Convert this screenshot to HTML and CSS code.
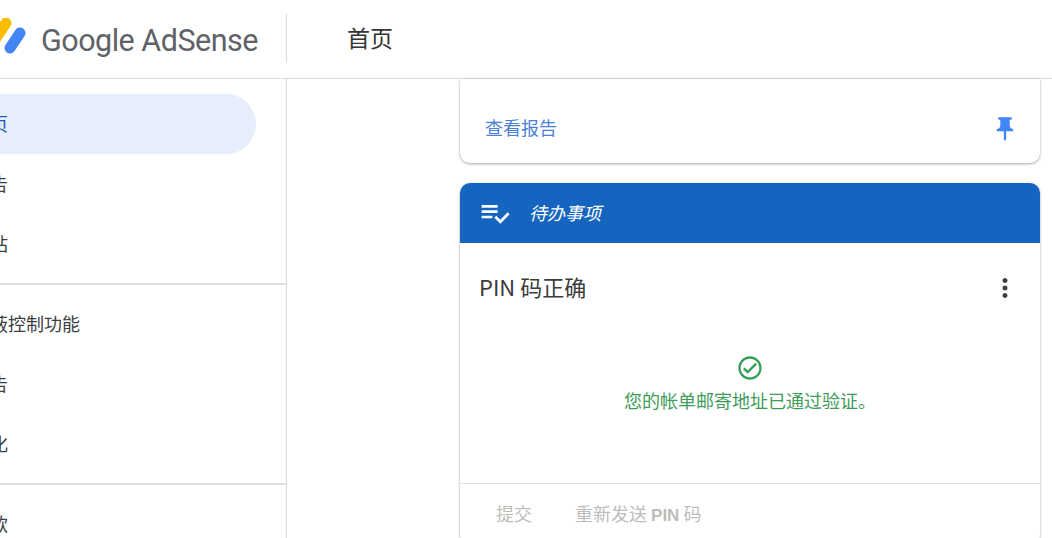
FILE: index.html
```html
<!DOCTYPE html>
<html lang="zh-CN">
<head>
    <meta charset="UTF-8">
    <title>Google AdSense</title>
    <link rel="stylesheet" href="styles.css">
</head>
<body>
    <div class="app">
        <header class="topbar">
            <div class="brand">
                <svg class="brand-mark" width="40" height="40" viewBox="0 0 40 40">
                    <line class="mark-yellow" x1="10" y1="20" x2="20" y2="5"/>
                    <line class="mark-blue" x1="24" y1="30" x2="34" y2="15"/>
                </svg>
                <span class="brand-name">Google AdSense</span>
            </div>
            <h1 class="page-title">首页</h1>
        </header>

        <div class="layout">
            <nav class="sidebar">
                <div class="nav-group">
                    <a class="nav-link active">首页</a>
                    <a class="nav-link">报告</a>
                    <a class="nav-link">网站</a>
                </div>
                <div class="nav-group">
                    <a class="nav-link">屏蔽控制功能</a>
                    <a class="nav-link">广告</a>
                    <a class="nav-link">优化</a>
                </div>
                <div class="nav-group">
                    <a class="nav-link">付款</a>
                </div>
            </nav>

            <main class="content">
                <section class="card report-card">
                    <a class="report-link">查看报告</a>
                    <svg class="pin-icon" width="28" height="28" viewBox="0 0 24 24"><path d="M16 9V4l1 0c.55 0 1-.45 1-1s-.45-1-1-1H7c-.55 0-1 .45-1 1s.45 1 1 1l1 0v5c0 1.66-1.34 3-3 3v2h5.97v7l1 1 1-1v-7H19v-2c-1.66 0-3-1.34-3-3z"/></svg>
                </section>

                <section class="card todo-card">
                    <div class="todo-head">
                        <svg class="todo-icon" width="32" height="32" viewBox="0 0 24 24"><path d="M14 10H2v2h12v-2zm0-4H2v2h12V6zM2 16h8v-2H2v2zm19.5-4.5L23 13l-6.99 7-4.51-4.5L13 14l3.01 3 5.49-5.5z"/></svg>
                        <span class="todo-label">待办事项</span>
                    </div>
                    <div class="todo-title">
                        <h2>PIN 码正确</h2>
                        <svg class="more-icon" width="30" height="30" viewBox="0 0 24 24"><path d="M12 8c1.1 0 2-.9 2-2s-.9-2-2-2-2 .9-2 2 .9 2 2 2zm0 2c-1.1 0-2 .9-2 2s.9 2 2 2 2-.9 2-2-.9-2-2-2zm0 6c-1.1 0-2 .9-2 2s.9 2 2 2 2-.9 2-2-.9-2-2-2z"/></svg>
                    </div>
                    <div class="todo-status">
                        <svg class="status-icon" width="28" height="28" viewBox="0 0 24 24"><path d="M12 2C6.48 2 2 6.48 2 12s4.48 10 10 10 10-4.48 10-10S17.52 2 12 2zm0 18c-4.41 0-8-3.59-8-8s3.59-8 8-8 8 3.59 8 8-3.59 8-8 8zm4.59-12.42L10 14.17l-2.59-2.58L6 13l4 4 8-8z"/></svg>
                        <p>您的帐单邮寄地址已通过验证。</p>
                    </div>
                    <div class="todo-actions">
                        <a>提交</a>
                        <a>重新发送 <b>PIN</b> 码</a>
                    </div>
                </section>
            </main>
        </div>
    </div>
</body>
</html>
```

FILE: styles.css
```css
* {
    margin: 0;
    padding: 0;
    box-sizing: border-box;
    font-family: "Noto Sans CJK SC", "Liberation Sans", sans-serif;
}

html, body {
    height: 100%;
    overflow: hidden;
    background: #fff;
}

/* the whole app sits a little past the left window edge */
.app {
    width: 1112px;
    height: 100vh;
    margin-left: -60px;
    display: flex;
    flex-direction: column;
}

.topbar {
    display: flex;
    align-items: center;
    height: 79px;
    flex: none;
    border-bottom: 1px solid #dadada;
}

.brand {
    width: 347px;
    height: 50px;
    margin-top: -3px;
    display: flex;
    align-items: center;
    border-right: 1px solid #dadada;
    padding-left: 46px;
}

.brand-mark {
    flex: none;
    margin-right: 15px;
}

.mark-yellow, .mark-blue {
    stroke-width: 11;
    stroke-linecap: round;
}

.mark-yellow {
    stroke: #fbbc04;
}

.mark-blue {
    stroke: #4285f4;
}

.brand-name {
    font-family: "Roboto", sans-serif;
    font-size: 30.5px;
    letter-spacing: -0.5px;
    margin-top: 6px;
    color: #5f6368;
    white-space: nowrap;
}

.page-title {
    margin: 0 0 4px 60px;
    font-size: 23px;
    font-weight: 400;
    color: #333;
}

.layout {
    flex: 1;
    display: flex;
    min-height: 0;
}

.sidebar {
    width: 347px;
    flex: none;
    border-right: 1px solid #dadada;
}

.nav-group {
    padding: 15px 30px 9px 0;
    border-bottom: 2px solid #dfdfdf;
}

.nav-group:not(:first-child) {
    padding-top: 9px;
}

.nav-link {
    display: flex;
    align-items: center;
    height: 60px;
    padding: 0 0 2px 32px;
    font-size: 18px;
    color: #3c4043;
    border-radius: 0 30px 30px 0;
}

.nav-link.active {
    background: #e6eefb;
    color: #1a56b0;
}

.content {
    flex: 1;
    padding-left: 173px;
    min-width: 0;
}

.card {
    width: 580px;
    background: #fff;
    border-radius: 10px;
    box-shadow: 0 1px 3px rgba(0, 0, 0, 0.35);
}

.report-card {
    height: 84px;
    display: flex;
    justify-content: space-between;
    align-items: flex-end;
    padding: 0 21px 20px 25px;
    border-radius: 0 0 10px 10px;
    margin-bottom: 20px;
}

.report-link {
    font-size: 18px;
    line-height: 30px;
    margin-bottom: 1px;
    color: #4a7fd8;
}

.pin-icon {
    fill: #4285f4;
}

.todo-head {
    height: 60px;
    display: flex;
    align-items: center;
    gap: 18px;
    padding-left: 19px;
    background: #1565c0;
    border-radius: 10px 10px 0 0;
    color: #fff;
}

.todo-icon {
    fill: #fff;
}

.todo-label {
    font-size: 18px;
    font-style: italic;
    margin-bottom: 2px;
}

.todo-title {
    height: 90px;
    display: flex;
    justify-content: space-between;
    align-items: center;
    padding: 0 20px 0 19px;
}

.todo-title h2 {
    font-size: 22px;
    font-weight: 400;
    margin-bottom: 4px;
    color: #3c3c3c;
}

.more-icon {
    fill: #3c4043;
}

.todo-status {
    height: 151px;
    display: flex;
    flex-direction: column;
    align-items: center;
    padding-top: 21px;
    border-bottom: 1px solid #e0e0e0;
    color: #3d9c57;
    font-size: 18px;
    line-height: 30px;
}

.todo-status p {
    margin-top: 3px;
}

.status-icon {
    fill: #349e54;
}

.todo-actions {
    display: flex;
    gap: 43px;
    padding: 14px 36px;
    font-size: 18px;
    line-height: 30px;
    color: #bdbdbd;
}

.todo-actions b {
    font-family: "Liberation Sans", sans-serif;
    font-size: 17px;
}
```
